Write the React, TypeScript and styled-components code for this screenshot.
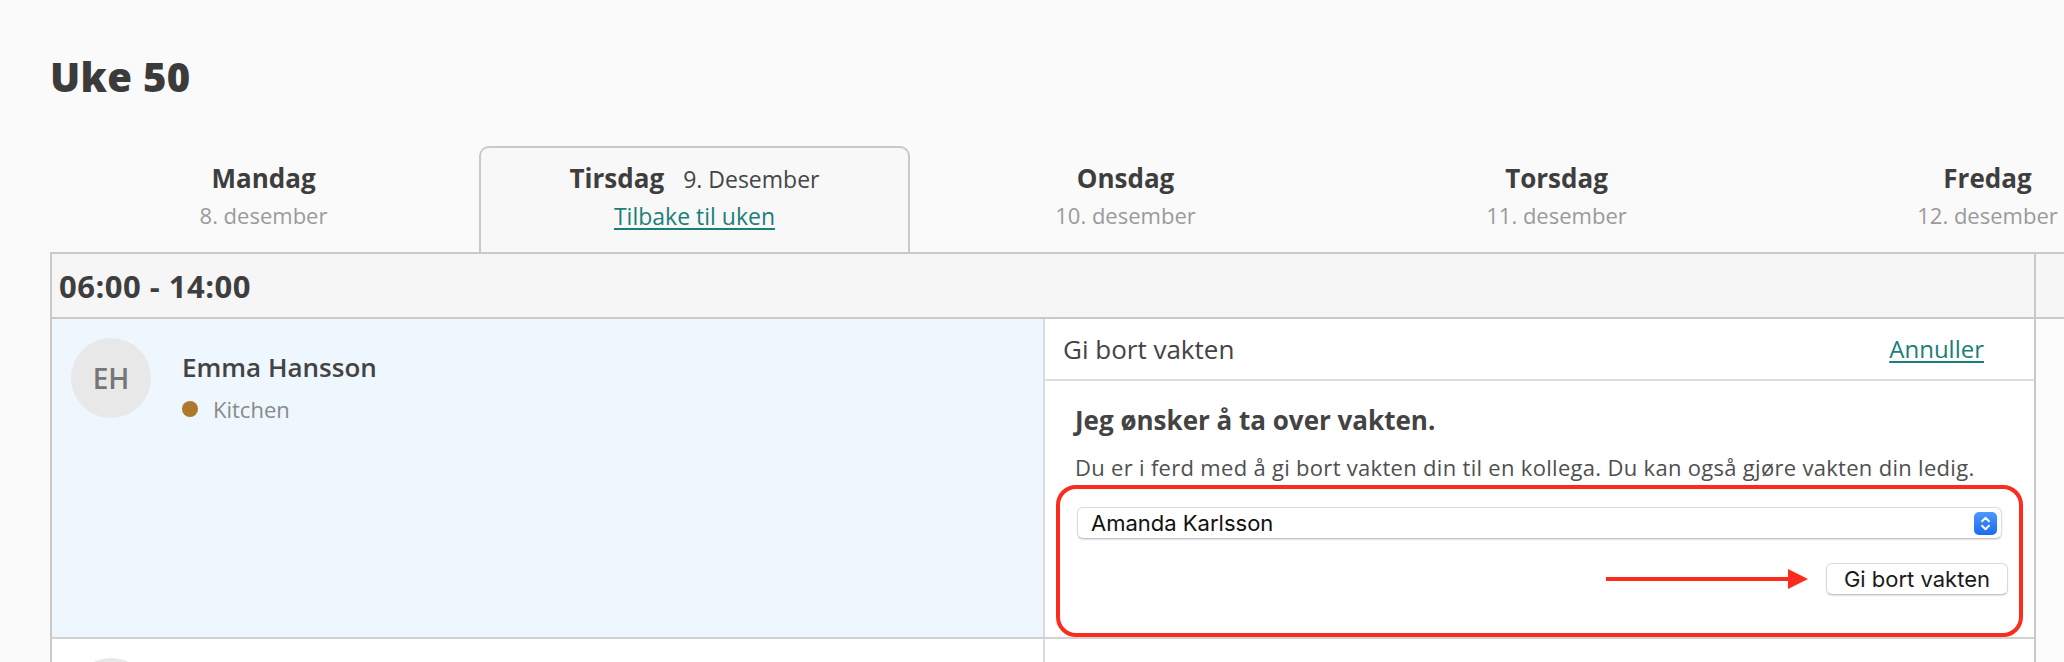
import React from "react";
import styled, { createGlobalStyle } from "styled-components";

const GlobalStyle = createGlobalStyle`
  html, body { margin: 0; padding: 0; background: #fafafa; overflow: hidden; }
  body { font-family: "Open Sans", "Noto Sans", sans-serif; color: #404040; }
  *, *::before, *::after { box-sizing: border-box; }
`;

const Page = styled.div`
  width: 2064px;
  height: 662px;
  overflow: hidden;
  padding: 53px 0 0 50px;
`;

const Title = styled.h1`
  margin: 0;
  font: 800 40px/48px "Open Sans", sans-serif;
  letter-spacing: 0.3px;
  color: #3b3b3b;
`;

const DayRow = styled.div`
  display: grid;
  grid-template-columns: repeat(5, 431px);
  margin: 45px 0 0 -2px;
`;

const DayCell = styled.div<{ $active?: boolean }>`
  height: 106px;
  padding-top: 13px;
  text-align: center;
  border: 2px solid ${(p) => (p.$active ? "#c9c9c9" : "transparent")};
  border-bottom: none;
  border-radius: 10px 10px 0 0;
  background: ${(p) => (p.$active ? "#f8f8f8" : "transparent")};
`;

const DayName = styled.div`
  font: 700 26px/34px "Open Sans", sans-serif;
  color: #3e3e3e;
`;

const DayInlineDate = styled.span`
  font-weight: 400;
  font-size: 23px;
  margin-left: 19px;
  color: #454545;
`;

const DayDate = styled.div`
  margin-top: 5px;
  font: 400 22px/30px "Open Sans", sans-serif;
  color: #9a9a9a;
`;

const BackLink = styled.a`
  display: inline-block;
  margin-top: 5px;
  font: 400 23px/30px "Open Sans", sans-serif;
  color: #1b7f79;
  text-decoration: underline;
  text-underline-offset: 3px;
  text-decoration-thickness: 2px;
`;

const Board = styled.div`
  display: flex;
  border-top: 2px solid #c9c9c9;
`;

const MainColumn = styled.div`
  flex: 0 0 1986px;
  border-left: 2px solid #c9c9c9;
  border-right: 2px solid #c9c9c9;
`;

const ExtraColumn = styled.div`
  flex: 1;
`;

const TimeHeader = styled.div`
  height: 65px;
  display: flex;
  align-items: center;
  padding-left: 7px;
  background: #f6f6f6;
  border-bottom: 2px solid #c9c9c9;
  font: 700 31px/40px "Open Sans", sans-serif;
  letter-spacing: 0.5px;
  color: #3e3e3e;
`;

const ShiftRow = styled.div`
  display: grid;
  grid-template-columns: 993px minmax(0, 1fr);
  border-bottom: 2px solid #d2d2d2;
`;

const PersonCell = styled.div<{ $highlight?: boolean }>`
  display: flex;
  align-items: flex-start;
  gap: 31px;
  padding: 19px 0 0 19px;
  background: ${(p) => (p.$highlight ? "#edf7fd" : "#ffffff")};
  border-right: 2px solid #dadada;
  min-height: 120px;
`;

const Avatar = styled.div`
  flex: 0 0 80px;
  height: 80px;
  border-radius: 50%;
  background: #e8e8e8;
  display: flex;
  align-items: center;
  justify-content: center;
  font: 600 28px/1 "Open Sans", sans-serif;
  color: #767676;
`;

const PersonInfo = styled.div`
  padding-top: 12px;
`;

const PersonName = styled.div`
  font: 600 26px/34px "Open Sans", sans-serif;
  color: #434343;
`;

const Role = styled.div`
  display: flex;
  align-items: center;
  gap: 15px;
  margin-top: 10px;
  font: 400 22px/30px "Open Sans", sans-serif;
  color: #8a8a8a;
`;

const RoleDot = styled.span<{ $color: string }>`
  width: 16px;
  height: 16px;
  border-radius: 50%;
  background: ${(p) => p.$color};
`;

const Panel = styled.div`
  background: #ffffff;
  min-width: 0;
`;

const PanelHeader = styled.div`
  height: 62px;
  display: flex;
  align-items: center;
  justify-content: space-between;
  padding: 0 50px 0 18px;
  border-bottom: 2px solid #dedede;
`;

const PanelTitle = styled.div`
  font: 400 26px/34px "Open Sans", sans-serif;
  color: #444444;
`;

const CancelLink = styled.a`
  font: 400 24px/34px "Open Sans", sans-serif;
  color: #1b7f79;
  text-decoration: underline;
  text-underline-offset: 3px;
  text-decoration-thickness: 2px;
`;

const PanelBody = styled.div`
  padding-top: 21px;
`;

const BodyText = styled.div`
  padding-left: 30px;
`;

const BodyTitle = styled.h3`
  margin: 0;
  font: 700 26px/36px "Open Sans", sans-serif;
  color: #434343;
`;

const BodyParagraph = styled.p`
  margin: 14px 0 0;
  font: 400 22px/30px "Open Sans", sans-serif;
  letter-spacing: 0.3px;
  color: #4f4f4f;
`;

const ActionBox = styled.div`
  margin: 3px 11px 0;
  border: 4px solid #fb2c1d;
  border-radius: 20px;
  padding: 18px 14px 38px 17px;
`;

const SelectShell = styled.div`
  display: flex;
  align-items: center;
  height: 32px;
  margin-right: 3px;
  padding-right: 4px;
  background: #ffffff;
  border: 1px solid #dcdcdc;
  border-bottom-color: #c4c4c4;
  border-radius: 6px;
  box-shadow: 0 1px 1.5px rgba(0, 0, 0, 0.12);
`;

const NativeSelect = styled.select`
  flex: 1;
  min-width: 0;
  height: 100%;
  appearance: none;
  -webkit-appearance: none;
  border: none;
  background: transparent;
  outline: none;
  padding: 0 0 0 13px;
  font: 400 22px/30px "Inter", "Liberation Sans", sans-serif;
  color: #111111;
`;

const Stepper = styled.span`
  flex: 0 0 23px;
  height: 23px;
  border-radius: 5px;
  background: linear-gradient(#4d97ff, #1a6cf0);
  display: flex;
  align-items: center;
  justify-content: center;
`;

const ButtonRow = styled.div`
  margin-top: 24px;
  display: flex;
  justify-content: flex-end;
  align-items: center;
  gap: 18px;
`;

const GiveButton = styled.button`
  height: 32px;
  padding: 0 17px;
  background: #ffffff;
  border: 1px solid #dadada;
  border-bottom-color: #c6c6c6;
  border-radius: 6px;
  box-shadow: 0 1px 1.5px rgba(0, 0, 0, 0.12);
  font: 400 22px/30px "Inter", "Liberation Sans", sans-serif;
  color: #1a1a1a;
  margin-right: -3px;
`;

const ExtraHeader = styled.div`
  height: 65px;
  background: #f6f6f6;
  border-bottom: 2px solid #c9c9c9;
`;

const ExtraBody = styled.div`
  height: 400px;
  background: #fcfcfc;
`;

const days = [
  { name: "Mandag", date: "8. desember" },
  { name: "Tirsdag", date: "9. Desember", active: true },
  { name: "Onsdag", date: "10. desember" },
  { name: "Torsdag", date: "11. desember" },
  { name: "Fredag", date: "12. desember" },
];

function StepperIcon() {
  return (
    <svg width="13" height="17" viewBox="0 0 13 17" fill="none">
      <path d="M3 6.2 L6.5 2.8 L10 6.2" stroke="#fff" strokeWidth="1.9" strokeLinecap="round" strokeLinejoin="round" />
      <path d="M3 10.8 L6.5 14.2 L10 10.8" stroke="#fff" strokeWidth="1.9" strokeLinecap="round" strokeLinejoin="round" />
    </svg>
  );
}

function Arrow() {
  return (
    <svg width="202" height="20" viewBox="0 0 202 20">
      <rect x="0" y="8" width="184" height="4" fill="#fb2c1d" />
      <polygon points="182,0 202,10 182,20" fill="#fb2c1d" />
    </svg>
  );
}

export default function App() {
  return (
    <>
      <GlobalStyle />
      <Page>
        <Title>Uke 50</Title>
        <DayRow>
          {days.map((d) =>
            d.active ? (
              <DayCell key={d.name} $active>
                <DayName>
                  {d.name}
                  <DayInlineDate>{d.date}</DayInlineDate>
                </DayName>
                <BackLink href="#">Tilbake til uken</BackLink>
              </DayCell>
            ) : (
              <DayCell key={d.name}>
                <DayName>{d.name}</DayName>
                <DayDate>{d.date}</DayDate>
              </DayCell>
            )
          )}
        </DayRow>
        <Board>
          <MainColumn>
            <TimeHeader>06:00 - 14:00</TimeHeader>
            <ShiftRow>
              <PersonCell $highlight>
                <Avatar>EH</Avatar>
                <PersonInfo>
                  <PersonName>Emma Hansson</PersonName>
                  <Role>
                    <RoleDot $color="#ae792c" />
                    Kitchen
                  </Role>
                </PersonInfo>
              </PersonCell>
              <Panel>
                <PanelHeader>
                  <PanelTitle>Gi bort vakten</PanelTitle>
                  <CancelLink href="#">Annuller</CancelLink>
                </PanelHeader>
                <PanelBody>
                  <BodyText>
                    <BodyTitle>Jeg ønsker å ta over vakten.</BodyTitle>
                    <BodyParagraph>
                      Du er i ferd med å gi bort vakten din til en kollega. Du kan også gjøre vakten din ledig.
                    </BodyParagraph>
                  </BodyText>
                  <ActionBox>
                    <SelectShell>
                      <NativeSelect defaultValue="ak">
                        <option value="ak">Amanda Karlsson</option>
                        <option value="ol">Ola Larsen</option>
                      </NativeSelect>
                      <Stepper>
                        <StepperIcon />
                      </Stepper>
                    </SelectShell>
                    <ButtonRow>
                      <Arrow />
                      <GiveButton>Gi bort vakten</GiveButton>
                    </ButtonRow>
                  </ActionBox>
                </PanelBody>
              </Panel>
            </ShiftRow>
            <ShiftRow>
              <PersonCell>
                <Avatar />
              </PersonCell>
              <Panel />
            </ShiftRow>
          </MainColumn>
          <ExtraColumn>
            <ExtraHeader />
            <ExtraBody />
          </ExtraColumn>
        </Board>
      </Page>
    </>
  );
}
